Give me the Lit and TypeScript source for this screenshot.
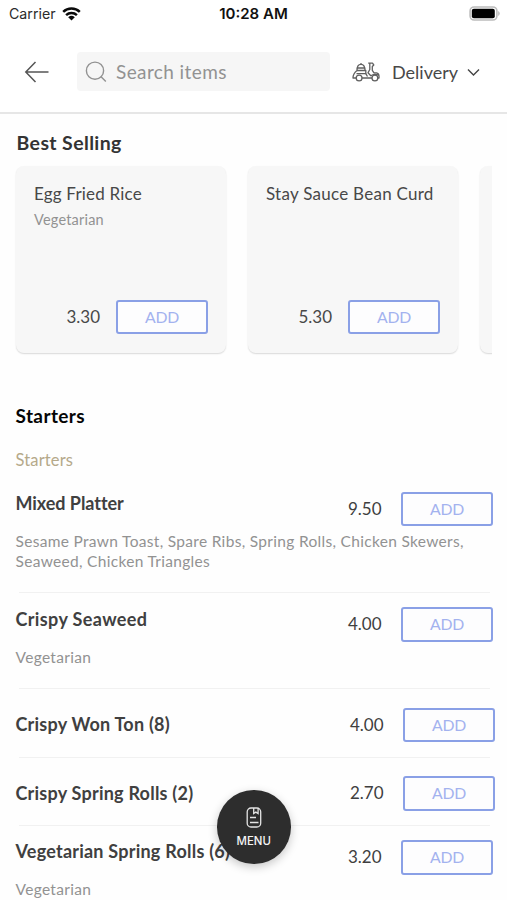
import { LitElement, html, css, nothing } from "lit";
import { customElement, property } from "lit/decorators.js";
import { classMap } from "lit/directives/class-map.js";

interface Dish {
  name: string;
  price: string;
  note?: string;
  kind: string;
}

const bestSelling: Dish[] = [
  { name: "Egg Fried Rice", note: "Vegetarian", price: "3.30", kind: "short" },
  { name: "Stay Sauce Bean Curd", price: "5.30", kind: "long" },
];

const starters: Dish[] = [
  {
    name: "Mixed Platter",
    price: "9.50",
    note: "Sesame Prawn Toast, Spare Ribs, Spring Rolls, Chicken Skewers, Seaweed, Chicken Triangles",
    kind: "first",
  },
  { name: "Crispy Seaweed", price: "4.00", note: "Vegetarian", kind: "noted" },
  { name: "Crispy Won Ton (8)", price: "4.00", kind: "plain" },
  { name: "Crispy Spring Rolls (2)", price: "2.70", kind: "plain" },
  { name: "Vegetarian Spring Rolls (6)", price: "3.20", note: "Vegetarian", kind: "last" },
];

@customElement("add-button")
class AddButton extends LitElement {
  static styles = css`
    :host { display: block; flex: none; }
    .add {
      display: flex; align-items: flex-start; justify-content: center;
      box-sizing: border-box; width: 92px; height: 34.5px; padding: 0;
      border: 2px solid #8aa0e6; border-radius: 3px; background: #fdfdfe;
      color: #a3b2ef; font: 400 15.8px/29px Lato, sans-serif; letter-spacing: -0.3px;
    }
  `;
  render() {
    return html`<button class="add">ADD</button>`;
  }
}

@customElement("dish-card")
class DishCard extends LitElement {
  @property({ attribute: false }) dish?: Dish;
  static styles = css`
    :host { display: block; flex: none; width: 209.5px; height: 186.5px; }
    .card {
      box-sizing: border-box; height: 100%; padding: 17px 17.5px 18.5px 18px; border-radius: 8px;
      background: #f7f7f7; box-shadow: 0 1px 1.5px rgba(0, 0, 0, 0.15);
      display: flex; flex-direction: column;
    }
    .name { font-size: 17px; line-height: 22px; color: #484848; white-space: nowrap; letter-spacing: 0.2px; }
    .long { letter-spacing: 0.26px; }
    .note { margin-top: 5px; font-size: 14.5px; line-height: 20px; color: #929292; letter-spacing: 0.2px; }
    .foot { margin-top: auto; display: flex; justify-content: flex-end; align-items: center; gap: 16px; }
    .price { font-size: 17px; line-height: 22px; color: #484848; }
  `;
  render() {
    const d = this.dish;
    return html`<div class="card">
      ${d
        ? html`<div class="name ${d.kind}">${d.name}</div>
            ${d.note ? html`<div class="note">${d.note}</div>` : nothing}
            <div class="foot"><span class="price">${d.price}</span><add-button></add-button></div>`
        : nothing}
    </div>`;
  }
}

@customElement("dish-row")
class DishRow extends LitElement {
  @property({ attribute: false }) dish!: Dish;
  static styles = css`
    :host { display: block; }
    .row { box-sizing: border-box; padding: 0 14px 0 15.5px; }
    .first { height: 109px; padding-top: 8.5px; }
    .noted { height: 95px; padding-top: 14px; }
    .plain { height: 67.5px; padding: 18.5px 12px 0 15.5px; }
    .last { height: 74px; padding-top: 14px; }
    .rule { height: 1px; margin: 0 17px 0 19px; background: #f1f1f1; }
    .line { display: flex; align-items: flex-start; height: 34.5px; }
    .name {
      flex: 1; font-size: 18px; line-height: 24px; font-weight: 700; color: #404040;
      white-space: nowrap; letter-spacing: 0.23px;
    }
    .first .name { margin-top: -1px; letter-spacing: -0.05px; }
    .noted .name { letter-spacing: 0.37px; }
    .plain .name { margin-top: 4.5px; }
    .last .name { margin-top: -1px; }
    .price { margin-right: 19.5px; font-size: 17px; line-height: 33px; color: #3f3f3f; }
    .note { margin-top: 5px; font-size: 15.5px; line-height: 20px; color: #929292; letter-spacing: 0.31px; }
    .last .note { margin-top: 4.5px; }
  `;
  render() {
    const d = this.dish;
    return html`<div class=${classMap({ row: true, [d.kind]: true })}>
        <div class="line">
          <span class="name">${d.name}</span><span class="price">${d.price}</span><add-button></add-button>
        </div>
        ${d.note ? html`<div class="note">${d.note}</div>` : nothing}
      </div>
      ${d.kind === "last" ? nothing : html`<div class="rule"></div>`}`;
  }
}

@customElement("app-root")
class AppRoot extends LitElement {
  static styles = css`
    :host {
      display: block; position: relative; height: 900px; overflow: hidden; background: #fefefe;
      font-family: Lato, "Open Sans", sans-serif;
    }
    .top { box-sizing: border-box; height: 114px; background: #fff; border-bottom: 2px solid #e6e6e6; }
    .status {
      display: grid; grid-template-columns: 1fr auto 1fr; align-items: center; height: 28px; padding: 0 7px 0 9px;
      font: 400 14.2px/28px Inter, sans-serif; color: #2b2b2b;
    }
    .carrier { display: flex; align-items: center; gap: 6px; }
    .clock { margin-right: 2px; font-size: 15px; font-weight: 600; color: #111; }
    .battery { justify-self: end; margin-top: -2px; }
    .bar { display: flex; align-items: center; height: 39px; margin-top: 24px; padding-left: 24px; }
    .search {
      box-sizing: border-box; width: 253px; height: 39px; margin-left: 28px; padding-left: 8px;
      display: flex; align-items: center; gap: 9px; background: #f6f6f6; border-radius: 4px;
      font-size: 19px; letter-spacing: 0.4px; color: #929292;
    }
    .mode { display: flex; align-items: center; margin-left: 22px; font-size: 18px; color: #484848; }
    .mode span { margin: 0 9px 0 12px; }
    svg { display: block; flex: none; }
    .best { margin: 17px 0 0 16.5px; font-size: 19.5px; line-height: 24px; font-weight: 700; color: #333; letter-spacing: 0.38px; }
    .cards { display: flex; gap: 22.5px; margin: 7px 15px 0 12px; padding: 4px 0 8.5px 4px; overflow: hidden; }
    .heading { margin: 43px 0 0 15.5px; font-size: 19px; line-height: 24px; font-weight: 700; color: #050505; letter-spacing: 0.4px; }
    .sub { margin: 21px 0 12px 15.5px; font-size: 16.5px; line-height: 22px; color: #b5a98a; letter-spacing: 0.15px; }
    .fab {
      position: absolute; left: 217px; top: 790px; width: 73.5px; height: 73.5px; box-sizing: border-box;
      border-radius: 50%; background: #2d2d2d; color: #f4f4f4; box-shadow: 0 3px 10px rgba(0, 0, 0, 0.22);
      display: flex; flex-direction: column; align-items: center; padding-top: 16.5px;
      font: 500 11.4px/16px Inter, sans-serif;
    }
    .fab span { margin-top: 5px; }
  `;
  render() {
    return html`
      <header class="top">
        <div class="status">
          <div class="carrier">
            Carrier
            <svg width="19" height="15" viewBox="0 0 19 15" fill="none" stroke="#0a0a0a" stroke-width="2.5">
              <path d="M1.2 4.8C5.8.4 13.2.4 17.8 4.8M4.1 8.2C7.1 5.4 11.9 5.4 14.9 8.2" />
              <path d="M6.2 10.2Q9.5 7.5 12.8 10.2L9.5 13.5Z" fill="#0a0a0a" stroke="none" />
            </svg>
          </div>
          <div class="clock">10:28 AM</div>
          <svg class="battery" width="31" height="15" viewBox="0 0 31 15">
            <rect x="1.1" y="1" width="26.8" height="13" rx="4" fill="#fff" stroke="#bcbcbc" stroke-width="1.6" />
            <rect x="2.8" y="2.7" width="23" height="9.6" rx="2" />
            <path d="M29.2 5v5q1.500-.7 1.500-2.500T29.200 5z" fill="#b9b9b9" />
          </svg>
        </div>
        <div class="bar">
          <svg width="25" height="22" viewBox="0 0 25 22" fill="none" stroke="#555" stroke-width="1.5">
            <path d="M24.5 11H1.8M11.5 1 1.8 11l9.7 10" />
          </svg>
          <div class="search">
            <svg width="22" height="22" viewBox="0 0 22 22" fill="none" stroke="#929292" stroke-width="1.4">
              <circle cx="10" cy="9.7" r="8.6" /><path d="m15.8 15.6 5 5" />
            </svg>
            Search items
          </div>
          <div class="mode">
            <svg width="28" height="20" viewBox="0 0 28 20" fill="none" stroke="#606060" stroke-width="1.3" stroke-linejoin="round">
              <path d="M5 8.500C5 4.300 6.200 2.300 9 2.300S13 4.300 13 8.500M9 2.300V1M5 6h8M5 8.500h8.800v3.200H4.500" />
              <path d="M5 8.500C2.500 10.500 1 13 1 16h3.200M13.800 11.700 15.500 14.500M10 16H20" />
              <path d="M16.200 1.200h4.300L21.800 3l-1.500 1.500v3.800L22 10.800h2.500q2.500.5 2.500 3.200v2h-1.200M17.800 1.500v6L16 10.800l3 3.200M18.800 13.800q3.700-2.600 8.200-.3" />
              <circle cx="7.100" cy="16" r="2.900" /><circle cx="22.900" cy="16" r="2.900" />
            </svg>
            <span>Delivery</span>
            <svg width="13" height="8" viewBox="0 0 13 8" fill="none" stroke="#444" stroke-width="1.4"><path d="m1 1.500 5.500 5.500L12 1.500" /></svg>
          </div>
        </div>
      </header>
      <h2 class="best">Best Selling</h2>
      <div class="cards">
        ${bestSelling.map((d) => html`<dish-card .dish=${d}></dish-card>`)}<dish-card></dish-card>
      </div>
      <h2 class="heading">Starters</h2>
      <div class="sub">Starters</div>
      ${starters.map((d) => html`<dish-row .dish=${d}></dish-row>`)}
      <div class="fab">
        <svg width="16" height="21" viewBox="0 0 16 21" fill="none" stroke="#e4e4e4" stroke-width="1.3">
          <rect x="1.2" y="1" width="13.5" height="19" rx="3.8" /><path d="M7.7 1v5.5l2.200-1.400 2.200 1.400V1.500M4 10.500h6M4 15.500h8.500" />
        </svg>
        <span>MENU</span>
      </div>
    `;
  }
}
